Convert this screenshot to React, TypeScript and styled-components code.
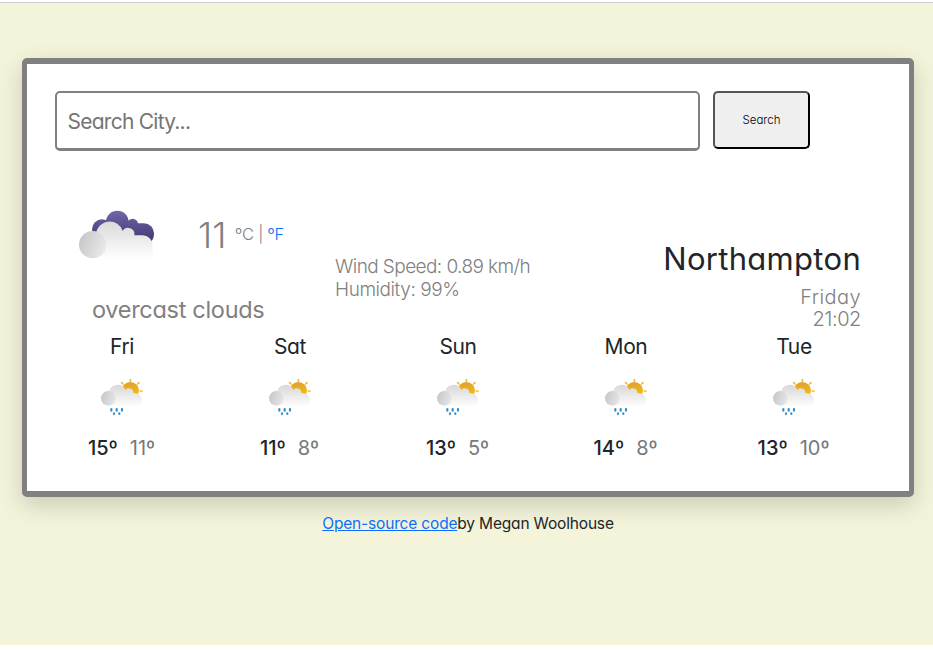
import React from 'react';
import styled, { createGlobalStyle } from 'styled-components';

const GlobalStyle = createGlobalStyle`
  *, *::before, *::after { box-sizing: border-box; }
  body {
    margin: 0;
    background: #fff;
    color: #212529;
    font-family: Inter, 'Liberation Sans', sans-serif;
    font-feature-settings: 'cv11' 1;
  }
`;

const Page = styled.div`
  margin-top: 2px;
  height: 643px;
  padding: 55px 19px 0 22px;
  border-top: 1px solid #ccc;
  background: #f4f4db;
`;

const Card = styled.main`
  height: 439px;
  padding: 27px 11px 0;
  border: solid #808080;
  border-width: 6px 5px;
  border-radius: 5px;
  background: #fff;
  box-shadow: 0 8px 25px rgba(0, 0, 0, 0.17);
`;

const SearchForm = styled.form`
  display: flex;
  align-items: flex-start;
  gap: 13px;
  height: 60px;
  margin-left: 17px;
`;

const SearchInput = styled.input`
  width: 645px;
  height: 60px;
  padding: 1px 10.5px 0;
  border: 2px solid #808080;
  border-bottom-width: 3px;
  border-radius: 5px;
  background: #fff;
  font: 400 21px Inter, sans-serif;
  font-feature-settings: 'cv11' 1;
  letter-spacing: -0.75px;
  outline: none;

  &::placeholder { color: #757575; opacity: 1; }
`;

const SearchButton = styled.button`
  width: 97px;
  height: 58px;
  padding: 0;
  border: 2px solid;
  border-color: #555 #000 #000 #555;
  border-radius: 5px;
  background: #efefef;
  color: #000;
  font: 300 11.5px Inter, sans-serif;
  font-feature-settings: 'cv11' 1;
`;

const Current = styled.section`
  display: grid;
  grid-template-columns: 297px 1fr 1fr;
  height: 134px;
  margin-top: 45px;
  color: #808080;
`;

const Conditions = styled.div`
  padding-left: 39px;
`;

const Reading = styled.div`
  display: flex;
  align-items: center;
  height: 78px;
  line-height: 40px;
`;

const Temperature = styled.span`
  margin-left: 41px;
  width: 37px;
  font-size: 36px;
  font-weight: 300;
`;

const Units = styled.span`
  padding-bottom: 2px;
  font-size: 16.5px;
  font-weight: 300;
  letter-spacing: -0.2px;
`;

const UnitLink = styled.a`
  color: #0d6efd;
  text-decoration: none;
`;

const Description = styled.div`
  margin: 18px 0 0 15px;
  font-size: 23.5px;
  font-weight: 400;
  line-height: 36px;
  letter-spacing: -0.3px;
`;

const Details = styled.div`
  padding-top: 59px;
  font-size: 19px;
  font-weight: 300;
  line-height: 23px;
`;

const Detail = styled.div<{ $tracking: number }>`
  letter-spacing: ${(p) => p.$tracking}px;
`;

const Place = styled.div`
  padding: 45px 37px 0 0;
  text-align: right;
`;

const City = styled.h1`
  margin: 0 0 9px;
  color: #212529;
  font-size: 31px;
  font-weight: 400;
  line-height: 36px;
  letter-spacing: 0.3px;
`;

const Moment = styled.div<{ $tracking: number }>`
  font-size: 20px;
  font-weight: 300;
  line-height: 22px;
  letter-spacing: ${(p) => p.$tracking}px;
`;

const Forecast = styled.section`
  display: grid;
  grid-template-columns: repeat(5, 168px);
`;

const Day = styled.div`
  display: flex;
  flex-direction: column;
  align-items: center;
`;

const DayName = styled.div`
  margin-bottom: 15px;
  font-size: 21px;
  line-height: 34px;
  letter-spacing: -0.4px;
`;

const Temps = styled.div`
  display: flex;
  gap: 12px;
  margin: 20px 1px 0 0;
  font-size: 20px;
  line-height: 24px;
`;

const High = styled.span`
  font-weight: 500;
`;

const Low = styled.span`
  color: #77797b;
`;

const Footer = styled.footer`
  margin-top: 15px;
  text-align: center;
  font-size: 15.5px;
  line-height: 24px;
  letter-spacing: -0.17px;
`;

const SourceLink = styled.a`
  color: #0d6efd;
  text-decoration: underline;
`;

function OvercastIcon() {
  return (
    <svg width="80" height="54" viewBox="50 55 240 162">
      <defs>
        <linearGradient id="oc-dark" gradientUnits="userSpaceOnUse" x1="0" y1="63" x2="0" y2="155">
          <stop offset="0" stopColor="#7066aa" />
          <stop offset="1" stopColor="#423872" />
        </linearGradient>
        <linearGradient id="oc-light" gradientUnits="userSpaceOnUse" x1="0" y1="94" x2="0" y2="208">
          <stop offset="0" stopColor="#d9d9d9" />
          <stop offset="1" stopColor="#fff" />
        </linearGradient>
        <linearGradient id="oc-front" x1="0" y1="0.2" x2="1" y2="0.6">
          <stop offset="0" stopColor="#c6c6c6" />
          <stop offset="1" stopColor="#e9e9e9" />
        </linearGradient>
      </defs>
      <g fill="url(#oc-dark)">
        <circle cx="171" cy="97" r="34" />
        <circle cx="125" cy="119" r="30" />
        <circle cx="217" cy="103" r="16" />
        <path d="M140 101H251A30 30 0 0 1 281 131Q281 148 272 156H140Z" />
      </g>
      <path
        fill="url(#oc-light)"
        d="M80 208V135H107A41 41 0 0 1 187 124A19 19 0 0 1 222 137H247A30 30 0 0 1 277 167V190A18 18 0 0 1 259 208Z"
      />
      <circle cx="97" cy="165" r="41" fill="url(#oc-front)" />
    </svg>
  );
}

function SunShowerIcon({ id }: { id: string }) {
  return (
    <svg width="44" height="37" viewBox="90 145 132 111">
      <defs>
        <linearGradient id={`${id}-sun`} x1="0" y1="0" x2="0" y2="1">
          <stop offset="0" stopColor="#e0a12c" />
          <stop offset="1" stopColor="#fac60f" />
        </linearGradient>
        <linearGradient id={`${id}-cloud`} gradientUnits="userSpaceOnUse" x1="0" y1="165" x2="0" y2="230">
          <stop offset="0" stopColor="#d9d9d9" />
          <stop offset="1" stopColor="#fff" />
        </linearGradient>
        <linearGradient id={`${id}-front`} x1="0" y1="0.2" x2="1" y2="0.6">
          <stop offset="0" stopColor="#c6c6c6" />
          <stop offset="1" stopColor="#e6e6e6" />
        </linearGradient>
      </defs>
      <circle cx="181" cy="180" r="26" fill={`url(#${id}-sun)`} />
      <path
        d="M181 147v5M155 156l4 4M207 156l-4 4M211 181h5"
        stroke="#f5b82a"
        strokeWidth="5"
        strokeLinecap="round"
      />
      <path
        fill={`url(#${id}-cloud)`}
        d="M105 230V184H117A26 26 0 0 1 166 177A14 14 0 0 1 190 188H196A21 21 0 0 1 216 209A21 21 0 0 1 195 230Z"
      />
      <circle cx="115" cy="203" r="22" fill={`url(#${id}-front)`} />
      <path
        d="M124 235v5M140 235v5M156 235v5M132 248v2M148 248v2"
        stroke="#3591c8"
        strokeWidth="6.5"
        strokeLinecap="round"
      />
    </svg>
  );
}

const days = [
  { name: 'Fri', high: 15, low: 11 },
  { name: 'Sat', high: 11, low: 8 },
  { name: 'Sun', high: 13, low: 5 },
  { name: 'Mon', high: 14, low: 8 },
  { name: 'Tue', high: 13, low: 10 },
];

export default function App() {
  return (
    <>
      <GlobalStyle />
      <Page>
        <Card>
          <SearchForm onSubmit={(e) => e.preventDefault()}>
            <SearchInput type="text" placeholder="Search City..." />
            <SearchButton type="submit">Search</SearchButton>
          </SearchForm>
          <Current>
            <Conditions>
              <Reading>
                <OvercastIcon />
                <Temperature>11</Temperature>
                <Units>
                  ºC | <UnitLink href="#">ºF</UnitLink>
                </Units>
              </Reading>
              <Description>overcast clouds</Description>
            </Conditions>
            <Details>
              <Detail $tracking={-0.58}>Wind Speed: 0.89 km/h</Detail>
              <Detail $tracking={-0.42}>Humidity: 99%</Detail>
            </Details>
            <Place>
              <City>Northampton</City>
              <Moment $tracking={0.4}>Friday</Moment>
              <Moment $tracking={-0.4}>21:02</Moment>
            </Place>
          </Current>
          <Forecast>
            {days.map((day) => (
              <Day key={day.name}>
                <DayName>{day.name}</DayName>
                <SunShowerIcon id={day.name} />
                <Temps>
                  <High>{day.high}º</High>
                  <Low>{day.low}º</Low>
                </Temps>
              </Day>
            ))}
          </Forecast>
        </Card>
        <Footer>
          <SourceLink href="#">Open-source code</SourceLink>by Megan Woolhouse
        </Footer>
      </Page>
    </>
  );
}
